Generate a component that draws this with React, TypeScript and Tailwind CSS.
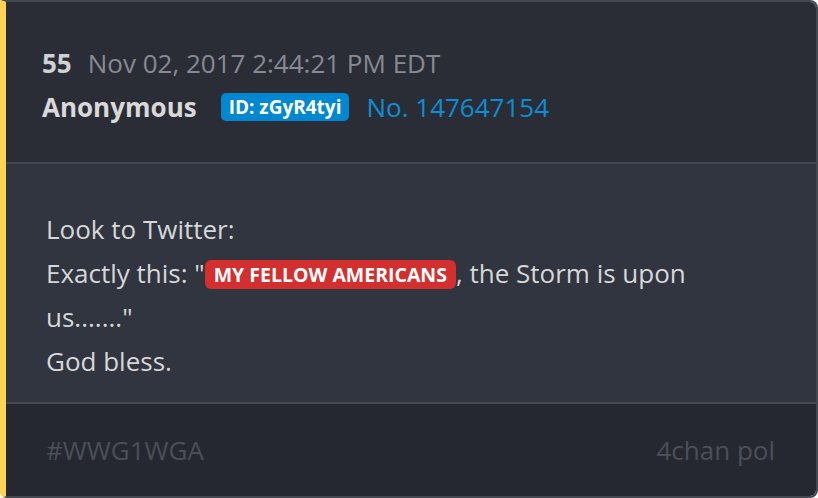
export default function App() {
  return (
    <div className="w-[818px] h-[498px] bg-white" style={{ fontFamily: '"Open Sans", "Noto Sans", sans-serif' }}>
      <div className="h-full flex flex-col overflow-hidden border-2 border-[#444851] border-l-[6px] border-l-[#ffd454] rounded-r-lg rounded-bl-md">
        <div className="h-[162px] shrink-0 bg-[#2a2d35] pl-[36px] pt-[39px] text-[26px] leading-[44px] border-b-2 border-[#444851]">
          <div className="flex items-center">
            <span className="font-bold text-[#d0d1d3]">55</span>
            <span className="ml-[16px] text-[#878a93]">Nov 02, 2017 2:44:21 PM EDT</span>
          </div>
          <div className="flex items-center">
            <span className="font-bold text-[#d9d9da]">Anonymous</span>
            <span className="ml-[24px] h-[28px] px-[8px] rounded-[5px] bg-[#0288d1] text-white text-[19px] font-bold leading-[28px]">ID: zGyR4tyi</span>
            <span className="ml-[17px] text-[#0a8fd6]">No. 147647154</span>
          </div>
        </div>
        <div className="h-[240px] shrink-0 bg-[#30353f] pl-[40px] pr-[60px] pt-[43px] text-[26px] leading-[44px] text-[#d6d7d8] border-b-2 border-[#444851]">
          <div>Look to Twitter:</div>
          <div>
            Exactly this: "<span className="inline-block h-[29px] px-[9px] rounded-[6px] bg-[#d32f2f] text-white text-[19.5px] font-bold leading-[29px] align-[1px]">MY FELLOW AMERICANS</span>, the Storm is upon us......."
          </div>
          <div>God bless.</div>
        </div>
        <div className="flex-1 bg-[#252830] pl-[40px] pr-[41px] flex items-center justify-between text-[26px] text-[#4b4f58]">
          <span>#WWG1WGA</span>
          <span>4chan pol</span>
        </div>
      </div>
    </div>
  );
}
